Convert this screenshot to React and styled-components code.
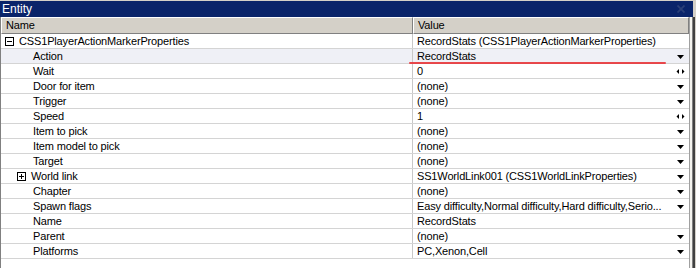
import React from "react";
import styled, { createGlobalStyle } from "styled-components";

const Global = createGlobalStyle`
  html, body { margin: 0; padding: 0; background: #ffffff; }
  body { font-family: "Liberation Sans", Arial, sans-serif; font-size: 11px; }
`;

const Window = styled.div`
  position: relative;
  width: 696px;
  height: 268px;
  overflow: hidden;
  background: #d4d0c8;
  display: flex;
  flex-direction: column;
  padding-top: 1px;
  box-sizing: border-box;
  letter-spacing: -0.15px;
`;

const TitleBar = styled.div`
  height: 16px;
  margin-right: 3px;
  background: #0a246a;
  color: #ffffff;
  display: flex;
  align-items: center;
  justify-content: space-between;
  padding: 0 6px 0 2px;
  font-size: 12px;
  line-height: 16px;
  letter-spacing: 0;
`;

const Close = styled.svg`
  width: 8px;
  height: 8px;
  margin-right: 2px;
`;

const Body = styled.div`
  flex: 1;
  display: flex;
  min-height: 0;
`;

const Frame = styled.div`
  flex: 1;
  display: flex;
  flex-direction: column;
  background: #ffffff;
  border-left: 1px solid #808080;
  border-right: 1px solid #a0a0a0;
  min-width: 0;
`;

const Edge = styled.div`
  width: 6px;
  display: flex;
  flex-direction: row;
`;

const EdgeLine = styled.div`
  width: ${(p) => p.$w}px;
  background: ${(p) => p.$c};
`;

const Header = styled.div`
  display: grid;
  grid-template-columns: 412px 1fr;
  height: 17px;
`;

const HeaderCell = styled.div`
  background: #d4d0c8;
  border-top: 1px solid #ffffff;
  border-left: 1px solid #ffffff;
  border-right: 1px solid #808080;
  border-bottom: 1px solid #808080;
  box-sizing: border-box;
  color: #000;
  padding-left: ${(p) => p.$pad}px;
  line-height: 14px;
  font-size: 11px;
`;

const Row = styled.div`
  display: grid;
  grid-template-columns: 412px 1fr;
  height: 15px;
  box-sizing: border-box;
  border-bottom: 1px solid #d4d4d4;
  background: ${(p) => (p.$active ? "#eff0f6" : "#ffffff")};
`;

const NameCell = styled.div`
  display: flex;
  align-items: center;
  padding-left: ${(p) => p.$indent}px;
  border-right: 1px solid #c8c8c8;
  white-space: nowrap;
  color: #000;
  gap: 5px;
`;

const ValueCell = styled.div`
  display: flex;
  align-items: center;
  padding-left: 4px;
  padding-right: 4px;
  white-space: nowrap;
  color: #000;
  min-width: 0;
`;

const ValueText = styled.span`
  flex: 1;
  min-width: 0;
`;

const Expander = styled.svg`
  width: 9px;
  height: 9px;
  flex: none;
`;

const ArrowBox = styled.svg`
  width: 9px;
  height: 7px;
  flex: none;
  margin-left: 2px;
`;

const Filler = styled.div`
  flex: 1;
`;

const Annotation = styled.div`
  position: absolute;
  left: 409px;
  top: 62px;
  width: 257px;
  height: 2px;
  border-radius: 1px;
  background: #e8353a;
  opacity: 0.9;
`;

const rows = [
  { name: "CSS1PlayerActionMarkerProperties", value: "RecordStats (CSS1PlayerActionMarkerProperties)", level: 0, expand: "minus" },
  { name: "Action", value: "RecordStats", level: 1, icon: "drop", active: true },
  { name: "Wait", value: "0", level: 1, icon: "spin" },
  { name: "Door for item", value: "(none)", level: 1, icon: "drop" },
  { name: "Trigger", value: "(none)", level: 1, icon: "drop" },
  { name: "Speed", value: "1", level: 1, icon: "spin" },
  { name: "Item to pick", value: "(none)", level: 1, icon: "drop" },
  { name: "Item model to pick", value: "(none)", level: 1, icon: "drop" },
  { name: "Target", value: "(none)", level: 1, icon: "drop" },
  { name: "World link", value: "SS1WorldLink001 (CSS1WorldLinkProperties)", level: 1, icon: "drop", expand: "plus" },
  { name: "Chapter", value: "(none)", level: 1, icon: "drop" },
  { name: "Spawn flags", value: "Easy difficulty,Normal difficulty,Hard difficulty,Serio...", level: 1, icon: "drop" },
  { name: "Name", value: "RecordStats", level: 1 },
  { name: "Parent", value: "(none)", level: 1, icon: "drop" },
  { name: "Platforms", value: "PC,Xenon,Cell", level: 1, icon: "drop" },
];

function ExpandIcon({ kind }) {
  return (
    <Expander viewBox="0 0 9 9">
      <rect x="0.5" y="0.5" width="8" height="8" fill="#fff" stroke="#000" />
      <line x1="2" y1="4.5" x2="7" y2="4.5" stroke="#000" />
      {kind === "plus" && <line x1="4.5" y1="2" x2="4.5" y2="7" stroke="#000" />}
    </Expander>
  );
}

function Arrow({ kind }) {
  if (kind === "spin") {
    return (
      <ArrowBox viewBox="0 0 9 7">
        <polygon points="3,1 3,6 0.5,3.5" fill="#000" />
        <polygon points="6,1 6,6 8.5,3.5" fill="#000" />
      </ArrowBox>
    );
  }
  return (
    <ArrowBox viewBox="0 0 9 7">
      <polygon points="1,2 8,2 4.5,6" fill="#000" />
    </ArrowBox>
  );
}

export default function App() {
  return (
    <>
      <Global />
      <Window>
        <TitleBar>
          <span>Entity</span>
          <Close viewBox="0 0 8 8">
            <path d="M0.5 0.5 L7.5 7.5 M7.5 0.5 L0.5 7.5" stroke="#2a3f78" strokeWidth="1.8" />
          </Close>
        </TitleBar>
        <Body>
          <Frame>
            <Header>
              <HeaderCell $pad={4}>Name</HeaderCell>
              <HeaderCell $pad={4}>Value</HeaderCell>
            </Header>
            {rows.map((r) => (
              <Row key={r.name} $active={r.active}>
                <NameCell $indent={r.level === 0 ? 4 : r.expand ? 16 : 32}>
                  {r.expand && <ExpandIcon kind={r.expand} />}
                  <span>{r.name}</span>
                </NameCell>
                <ValueCell>
                  <ValueText>{r.value}</ValueText>
                  {r.icon && <Arrow kind={r.icon} />}
                </ValueCell>
              </Row>
            ))}
            <Filler />
          </Frame>
          <Edge>
            <EdgeLine $w={2} $c="#f4f3ee" />
            <EdgeLine $w={1} $c="#808080" />
            <EdgeLine $w={2} $c="#404040" />
            <EdgeLine $w={1} $c="#d4d0c8" />
          </Edge>
        </Body>
        <Annotation />
      </Window>
    </>
  );
}
